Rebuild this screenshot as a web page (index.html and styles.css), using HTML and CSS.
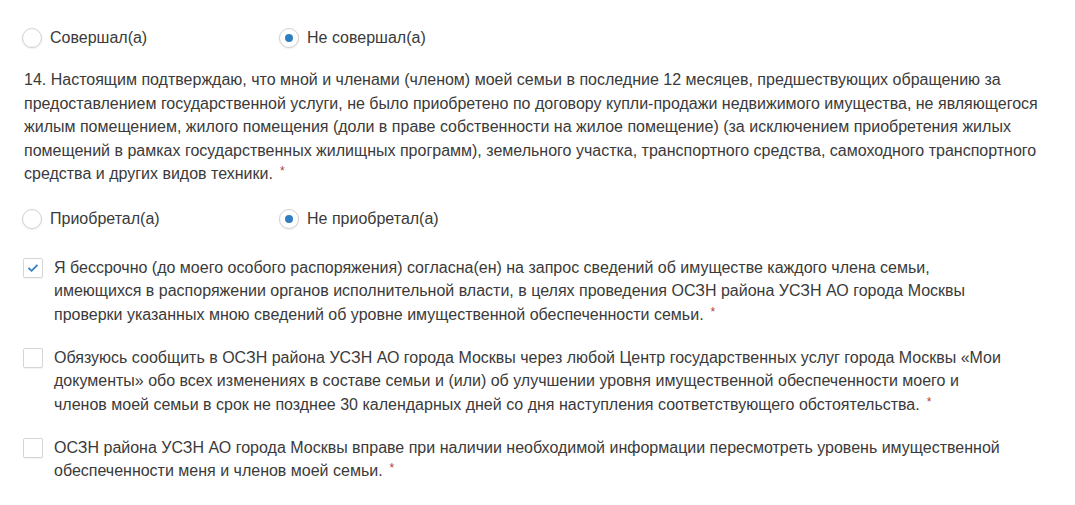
FILE: index.html
```html
<!DOCTYPE html>
<html lang="ru">
<head>
    <meta charset="UTF-8">
    <title>Заявление</title>
    <link rel="stylesheet" href="styles.css">
</head>
<body>
    <div class="form">
        <!-- Ответ на вопрос 13 -->
        <div class="radio-row">
            <label class="radio"><span class="radio-mark"></span>Совершал(а)</label>
            <label class="radio"><span class="radio-mark checked"></span>Не совершал(а)</label>
        </div>

        <p class="question required">14. Настоящим подтверждаю, что мной и членами (членом) моей семьи в последние 12 месяцев, предшествующих обращению за предоставлением государственной услуги, не было приобретено по договору купли-продажи недвижимого имущества, не являющегося жилым помещением, жилого помещения (доли в праве собственности на жилое помещение) (за исключением приобретения жилых помещений в рамках государственных жилищных программ), земельного участка, транспортного средства, самоходного транспортного средства и других видов техники.</p>

        <div class="radio-row second">
            <label class="radio"><span class="radio-mark"></span>Приобретал(а)</label>
            <label class="radio"><span class="radio-mark checked"></span>Не приобретал(а)</label>
        </div>

        <!-- Согласия -->
        <label class="check first">
            <span class="check-mark checked">
                <svg width="12" height="10" viewBox="0 0 12 10"><path d="M1.5 4.8 L4.6 7.8 L10.5 1.8" fill="none" stroke="#2f7ec2" stroke-width="1.8"/></svg>
            </span>
            <span class="check-text required">Я бессрочно (до моего особого распоряжения) согласна(ен) на запрос сведений об имуществе каждого члена семьи, имеющихся в распоряжении органов исполнительной власти, в целях проведения ОСЗН района УСЗН АО города Москвы проверки указанных мною сведений об уровне имущественной обеспеченности семьи.</span>
        </label>

        <label class="check">
            <span class="check-mark"></span>
            <span class="check-text required">Обязуюсь сообщить в ОСЗН района УСЗН АО города Москвы через любой Центр государственных услуг города Москвы «Мои документы» обо всех изменениях в составе семьи и (или) об улучшении уровня имущественной обеспеченности моего и членов моей семьи в срок не позднее 30 календарных дней со дня наступления соответствующего обстоятельства.</span>
        </label>

        <label class="check">
            <span class="check-mark"></span>
            <span class="check-text required">ОСЗН района УСЗН АО города Москвы вправе при наличии необходимой информации пересмотреть уровень имущественной обеспеченности меня и членов моей семьи.</span>
        </label>
    </div>
</body>
</html>
```

FILE: styles.css
```css
body {
    margin: 0;
    padding: 0;
    background-color: #fff;
    font-family: "Liberation Sans", Arial, sans-serif;
    font-size: 16px;
    color: #3a3a3a;
}

.form {
    width: 1020px;
    padding: 26px 0 0 22px;
}

/* Радиокнопки */
.radio-row {
    display: flex;
    height: 24px;
    line-height: 24px;
}

    .radio-row.second {
        margin-top: 21px;
    }

.radio {
    display: flex;
    align-items: center;
    width: 257px;
}

.radio-mark {
    box-sizing: border-box;
    width: 20px;
    height: 20px;
    margin-right: 8px;
    border: 1px solid #d2d2d2;
    border-radius: 50%;
    background-color: #fff;
    box-shadow: 0 1px 2px rgba(0, 0, 0, 0.08);
    position: relative;
}

    .radio-mark.checked::after {
        content: "";
        position: absolute;
        left: 5px;
        top: 5px;
        width: 8px;
        height: 8px;
        border-radius: 50%;
        background-color: #2f7ec2;
    }

/* Текст вопроса */
.question {
    margin: 18px 0 0 2px;
    line-height: 23.5px;
}

/* красная звёздочка обязательного поля */
.required::after {
    content: "*";
    display: inline-block;
    color: #b83a3a;
    font-size: 12px;
    line-height: 12px;
    margin-left: 7px;
    position: relative;
    top: -4px;
}

/* Чекбоксы */
.check {
    display: flex;
    align-items: flex-start;
    margin-top: 19.5px;
    padding-right: 36px;
    line-height: 23.5px;
}

    .check.first {
        margin-top: 25px;
    }

.check-mark {
    box-sizing: border-box;
    flex: 0 0 20px;
    width: 20px;
    height: 20px;
    margin: 2px 11px 0 1px;
    border: 1px solid #d5d5d5;
    border-radius: 2px;
    background-color: #fff;
    box-shadow: 0 1px 1px rgba(0, 0, 0, 0.05);
    display: flex;
    align-items: center;
    justify-content: center;
}

.check-text {
    flex: 1;
}
```
